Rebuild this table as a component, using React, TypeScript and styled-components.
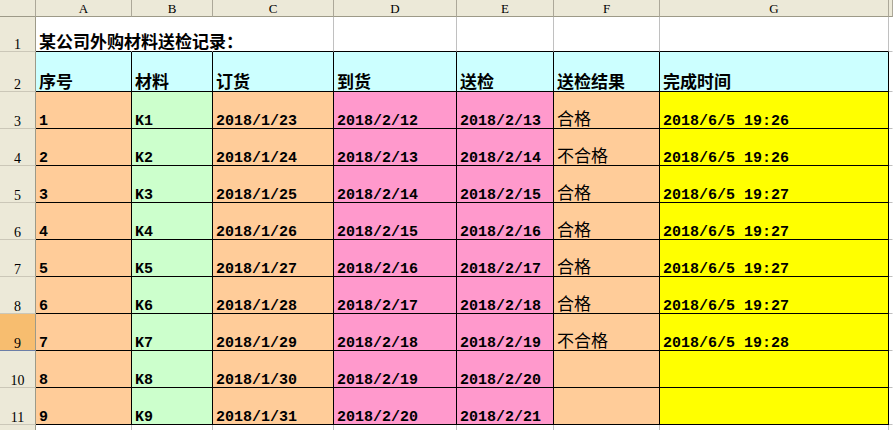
import React from "react";
import styled, { createGlobalStyle } from "styled-components";

const GlobalStyle = createGlobalStyle`
  html, body {
    margin: 0;
    padding: 0;
    background: #ffffff;
    overflow: hidden;
  }
`;

const Sheet = styled.div`
  display: grid;
  grid-template-columns: 36px 96px 81px 121px 123px 97px 106px 229px 1fr;
  grid-template-rows: 17px 35px 40px repeat(10, 37px);
  width: 893px;
  height: 430px;
  overflow: hidden;
  background: #ffffff;
`;

const ColHeader = styled.div`
  box-sizing: border-box;
  background: #ece9d8;
  border-right: 1px solid #aca899;
  border-bottom: 1px solid #9d9a88;
  display: flex;
  align-items: center;
  justify-content: center;
  padding-top: 1px;
  font-family: "Liberation Serif", serif;
  font-size: 13px;
  line-height: 13px;
  color: #000;
`;

const RowHeader = styled.div<{ $sel?: boolean }>`
  box-sizing: border-box;
  background: ${(p) => (p.$sel ? "#f7bd6f" : "#ece9d8")};
  border-right: 1px solid #9d9a88;
  border-bottom: 1px solid ${(p) => (p.$sel ? "#6b7fa8" : "#cbc7b8")};
  display: flex;
  align-items: flex-end;
  justify-content: center;
  font-family: "Liberation Serif", serif;
  font-size: 14px;
  line-height: 13px;
  color: #000;
`;

const Cell = styled.div<{ $bg?: string; $r?: string; $b?: string }>`
  box-sizing: border-box;
  background: ${(p) => p.$bg ?? "transparent"};
  border-right: 1px solid ${(p) => p.$r ?? "transparent"};
  border-bottom: 1px solid ${(p) => p.$b ?? "transparent"};
  display: flex;
  align-items: flex-end;
  padding-left: 3px;
  white-space: nowrap;
  color: #000;
`;

const Mono = styled.span`
  font-family: "Liberation Mono", "Noto Sans CJK SC", monospace;
  font-size: 15px;
  font-weight: 700;
  line-height: 12px;
`;

const Han = styled.span<{ $bold?: boolean }>`
  font-family: "Noto Sans CJK SC", sans-serif;
  font-size: 17px;
  font-weight: ${(p) => (p.$bold ? 700 : 400)};
  line-height: 20px;
`;

const COLS = ["A", "B", "C", "D", "E", "F", "G"];
const BG = ["#ffcc99", "#ccffcc", "#ffcc99", "#ff99cc", "#ff99cc", "#ffcc99", "#ffff00"];
const HEAD = ["序号", "材料", "订货", "到货", "送检", "送检结果", "完成时间"];

const DATA: string[][] = [
  ["1", "K1", "2018/1/23", "2018/2/12", "2018/2/13", "合格", "2018/6/5 19:26"],
  ["2", "K2", "2018/1/24", "2018/2/13", "2018/2/14", "不合格", "2018/6/5 19:26"],
  ["3", "K3", "2018/1/25", "2018/2/14", "2018/2/15", "合格", "2018/6/5 19:27"],
  ["4", "K4", "2018/1/26", "2018/2/15", "2018/2/16", "合格", "2018/6/5 19:27"],
  ["5", "K5", "2018/1/27", "2018/2/16", "2018/2/17", "合格", "2018/6/5 19:27"],
  ["6", "K6", "2018/1/28", "2018/2/17", "2018/2/18", "合格", "2018/6/5 19:27"],
  ["7", "K7", "2018/1/29", "2018/2/18", "2018/2/19", "不合格", "2018/6/5 19:28"],
  ["8", "K8", "2018/1/30", "2018/2/19", "2018/2/20", "", ""],
  ["9", "K9", "2018/1/31", "2018/2/20", "2018/2/21", "", ""],
];

const GRID = "#c0c0c0";

export default function App() {
  return (
    <>
      <GlobalStyle />
      <Sheet>
        {/* column header row */}
        <ColHeader />
        {COLS.map((c) => (
          <ColHeader key={c}>{c}</ColHeader>
        ))}
        <ColHeader />

        {/* row 1: title */}
        <RowHeader>1</RowHeader>
        <Cell $b="#000">
          <Han $bold>某公司外购材料送检记录：</Han>
        </Cell>
        <Cell $b="#000" />
        <Cell $b="#000" $r={GRID} />
        <Cell $b="#000" $r={GRID} />
        <Cell $b="#000" $r={GRID} />
        <Cell $b="#000" $r={GRID} />
        <Cell $b="#000" $r={GRID} />
        <Cell $b={GRID} />

        {/* row 2: headings */}
        <RowHeader>2</RowHeader>
        {HEAD.map((h) => (
          <Cell key={h} $bg="#ccffff" $r="#000" $b="#000">
            <Han $bold>{h}</Han>
          </Cell>
        ))}
        <Cell $b={GRID} />

        {/* data rows */}
        {DATA.map((row, ri) => (
          <React.Fragment key={ri}>
            <RowHeader $sel={ri === 6}>{ri + 3}</RowHeader>
            {row.map((v, ci) => (
              <Cell key={ci} $bg={BG[ci]} $r="#000" $b="#000">
                {v && (ci === 5 ? <Han>{v}</Han> : <Mono>{v}</Mono>)}
              </Cell>
            ))}
            <Cell $b={GRID} />
          </React.Fragment>
        ))}

        {/* row 12 (only its top edge is in view) */}
        <RowHeader />
        {COLS.map((c) => (
          <Cell key={c} $r={GRID} $b={GRID} />
        ))}
        <Cell $b={GRID} />
      </Sheet>
    </>
  );
}
